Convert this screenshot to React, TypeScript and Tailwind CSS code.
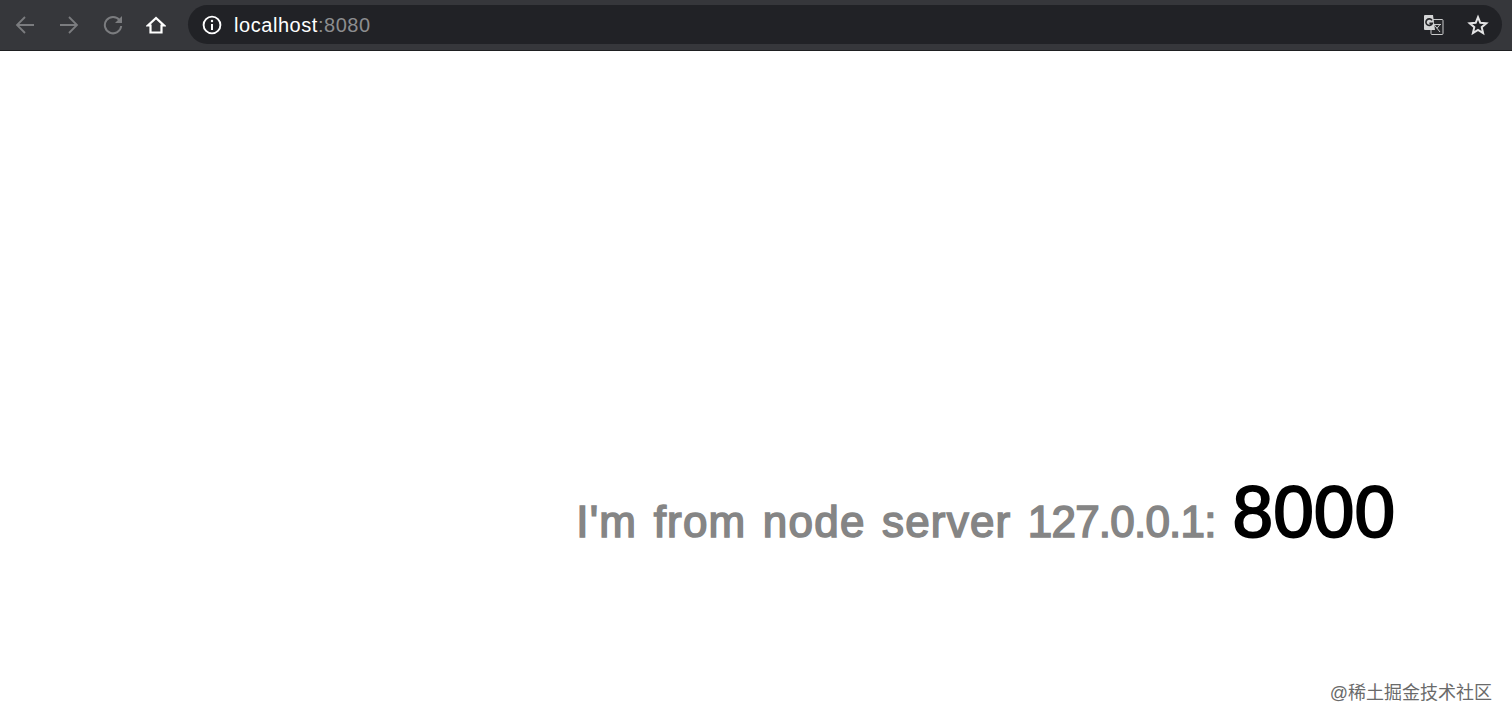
function TranslateIcon() {
    return (
        <svg width="22" height="22" viewBox="0 0 22 22" fill="none">
            <rect x="9" y="5.5" width="12" height="15" rx="1" fill="#26272a" stroke="#c9cacb" strokeWidth="1" />
            <path d="M12 10.5l6 7.5M18 10.5l-3 3.8M11.5 10.5h7.5" stroke="#c9cacb" strokeWidth="1" />
            <path d="M2 2a1 1 0 0 1 1-1h8l2 15H3a1 1 0 0 1-1-1z" fill="#d4d5d6" />
            <path d="M10 6.4A3.3 3.3 0 1 0 10.3 9.4H7.4" stroke="#26272a" strokeWidth="1.6" />
        </svg>
    );
}

function NavArrow({ flip }: { flip?: boolean }) {
    return (
        <svg width="20" height="20" viewBox="0 0 20 20" fill="none" className={flip ? 'rotate-180' : ''}>
            <path d="M19 10H2M10 2l-8 8 8 8" stroke="#7b7c7f" strokeWidth="1.8" />
        </svg>
    );
}

function ReloadIcon() {
    return (
        <svg width="20" height="20" viewBox="0 0 20 20" fill="none">
            <path d="M16.6 5.2A8.2 8.2 0 1 0 18.2 11" stroke="#7b7c7f" strokeWidth="2" />
            <path d="M19 1v7h-7z" fill="#7b7c7f" />
        </svg>
    );
}

function HomeIcon() {
    return (
        <svg width="20" height="18" viewBox="0 0 20 18" fill="none">
            <path d="M10 2L2 9.5h2.5V16.5h11V9.5H18z" stroke="#ffffff" strokeWidth="2.2" strokeLinejoin="miter" />
        </svg>
    );
}

function InfoIcon() {
    return (
        <svg width="20" height="20" viewBox="0 0 20 20" fill="none">
            <circle cx="10" cy="10" r="8.4" stroke="#ffffff" strokeWidth="1.9" />
            <path d="M10 9v6" stroke="#ffffff" strokeWidth="2" />
            <circle cx="10" cy="6" r="1.2" fill="#ffffff" />
        </svg>
    );
}

function StarIcon() {
    return (
        <svg width="22" height="22" viewBox="0 0 22 22" fill="none">
            <path d="M11 3.2l2.3 5.6 6 .5-4.6 3.9 1.4 5.9L11 16l-5.1 3.1 1.4-5.9-4.6-3.9 6-.5z" stroke="#e4e4e5" strokeWidth="2" />
        </svg>
    );
}

function Toolbar() {
    return (
        <div className="flex h-[51px] items-center border-b border-[#1e1f21] bg-[#36373b] pb-[1px] font-['Liberation_Sans',sans-serif]">
            <div className="flex w-[188px] shrink-0 items-center">
                <div className="ml-[15px]">
                    <NavArrow />
                </div>
                <div className="ml-[24px]">
                    <NavArrow flip />
                </div>
                <div className="ml-[24px]">
                    <ReloadIcon />
                </div>
                <div className="ml-[23px]">
                    <HomeIcon />
                </div>
            </div>
            <div className="mr-[10px] flex h-[39px] flex-1 items-center rounded-full bg-[#212226] pr-[13px] pl-[14px]">
                <InfoIcon />
                <div className="ml-[12px] flex-1 text-[20px] leading-none tracking-[0.55px] text-white">
                    localhost<span className="text-[#8c8d8f]">:8080</span>
                </div>
                <div className="-translate-x-[1px]">
                    <TranslateIcon />
                </div>
                <div className="ml-[22px]">
                    <StarIcon />
                </div>
            </div>
        </div>
    );
}

export default function App() {
    return (
        <div className="flex h-[724px] w-[1512px] flex-col overflow-hidden bg-white font-['Liberation_Sans',sans-serif]">
            <Toolbar />
            <main className="flex flex-1 flex-col">
                <div className="mt-[424px] flex items-baseline justify-end pr-[117px]">
                    <span className="text-[44px] leading-none tracking-[1.2px] text-[#858585] [word-spacing:3px] [-webkit-text-stroke:1.6px_#858585]">
                        I'm from node server <span className="tracking-[-0.8px]">127.0.0.1:</span>
                    </span>
                    <span className="ml-[17px] text-[73px] leading-none text-black [-webkit-text-stroke:2px_#000]">
                        8000
                    </span>
                </div>
                <div className="mt-[136px] pr-[20px] text-right font-['Liberation_Sans','Noto_Sans_CJK_SC',sans-serif] text-[18px] leading-none text-[#6a6a6a]">
                    @稀土掘金技术社区
                </div>
            </main>
        </div>
    );
}
